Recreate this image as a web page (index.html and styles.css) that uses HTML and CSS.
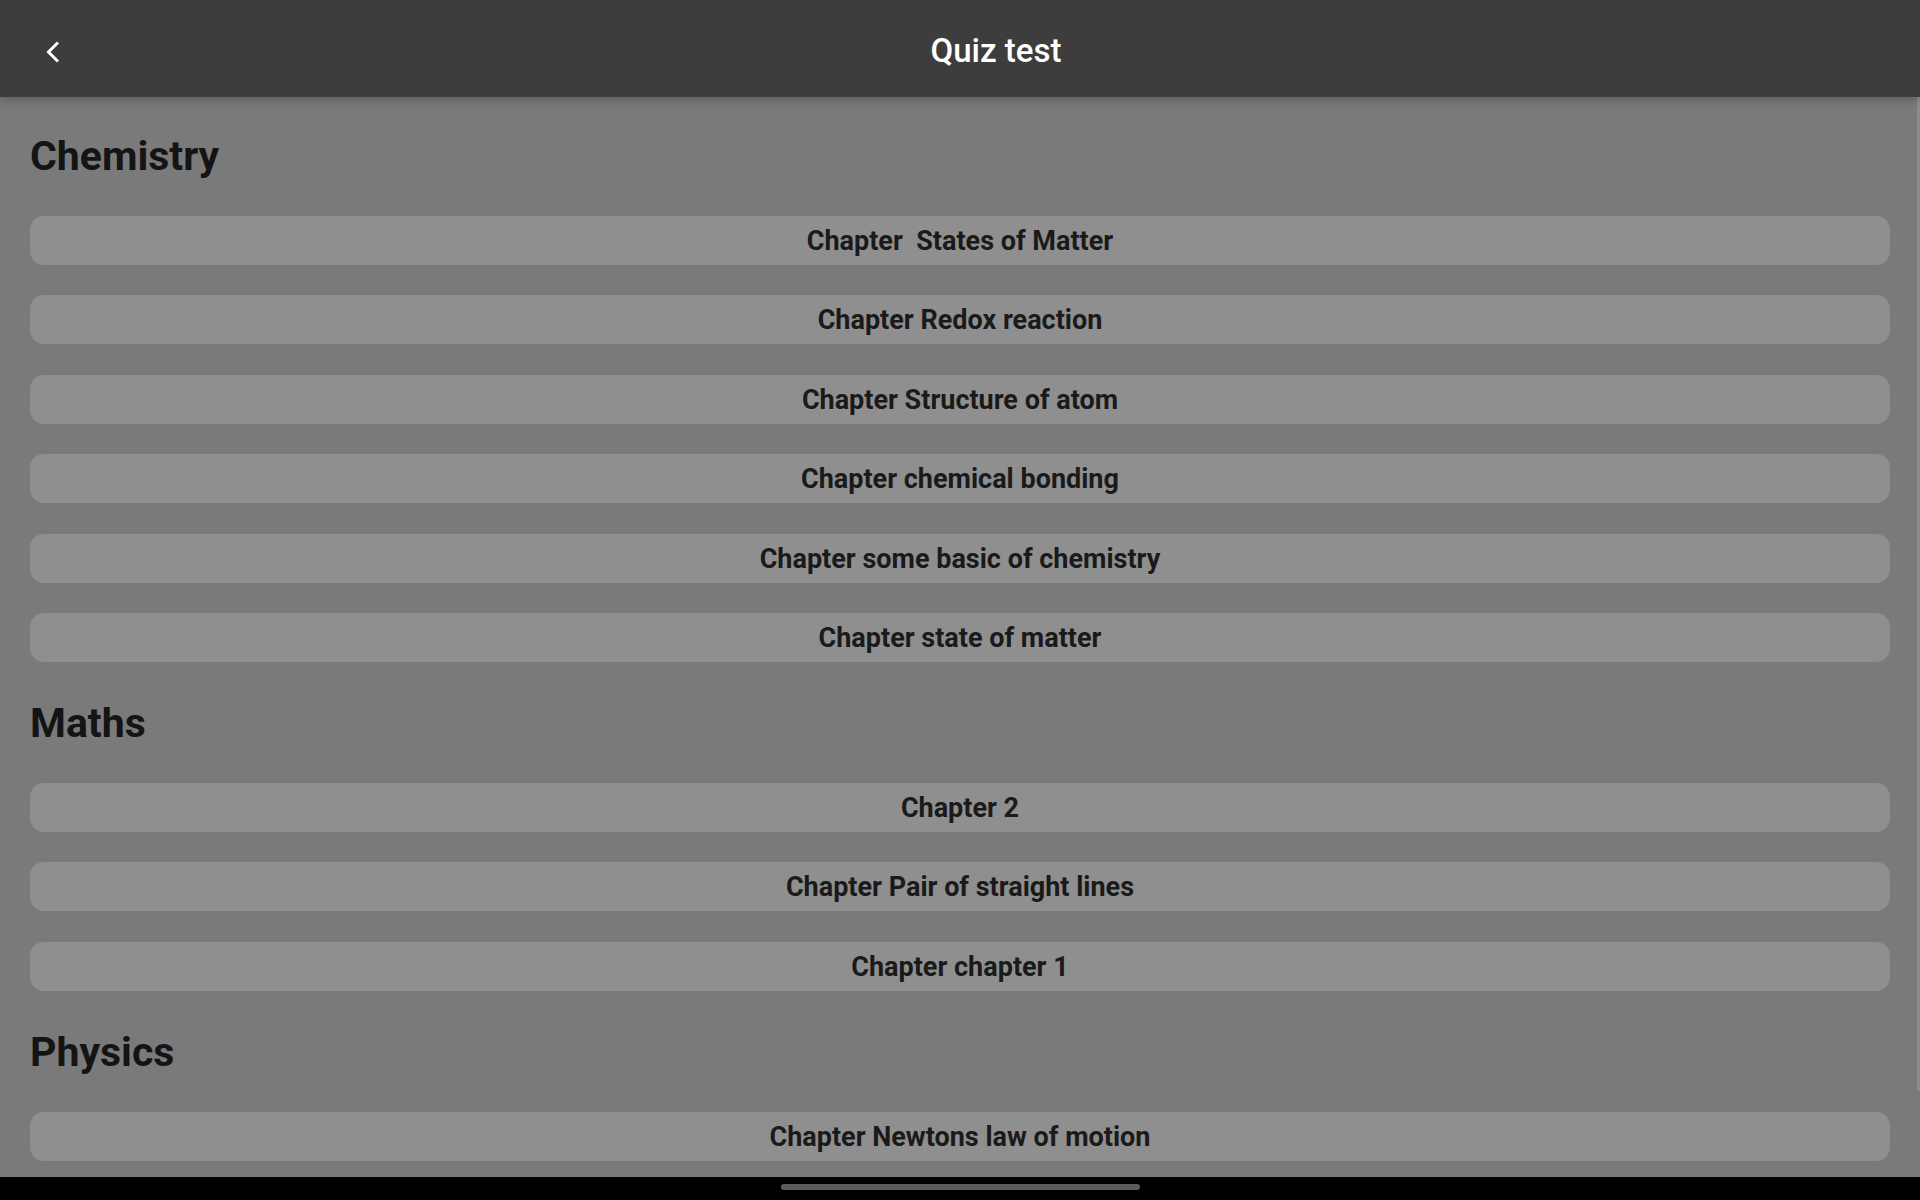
FILE: index.html
```html
<!DOCTYPE html>
<html lang="en">
<head>
<meta charset="utf-8">
<title>Quiz test</title>
<link rel="stylesheet" href="styles.css">
</head>
<body>
<div class="screen">
  <header class="appbar">
    <button class="back" aria-label="Back">
      <svg width="14" height="22" viewBox="0 0 14 22"><path d="M12 1.5 L2.5 11 L12 20.5" fill="none" stroke="#ffffff" stroke-width="3" stroke-linecap="butt" stroke-linejoin="miter"/></svg>
    </button>
    <h1 class="title">Quiz test</h1>
  </header>
  <main class="content">
    <section class="subject">
      <h2 class="subject-name">Chemistry</h2>
      <div class="chapters">
        <button class="chapter">Chapter&nbsp; States of Matter</button>
        <button class="chapter">Chapter Redox reaction</button>
        <button class="chapter">Chapter Structure of atom</button>
        <button class="chapter">Chapter chemical bonding</button>
        <button class="chapter">Chapter some basic of chemistry</button>
        <button class="chapter">Chapter state of matter</button>
      </div>
    </section>
    <section class="subject">
      <h2 class="subject-name">Maths</h2>
      <div class="chapters">
        <button class="chapter">Chapter 2</button>
        <button class="chapter">Chapter Pair of straight lines</button>
        <button class="chapter">Chapter chapter 1</button>
      </div>
    </section>
    <section class="subject">
      <h2 class="subject-name">Physics</h2>
      <div class="chapters">
        <button class="chapter">Chapter Newtons law of motion</button>
      </div>
    </section>
    <div class="scroll-thumb"></div>
  </main>
  <footer class="navbar"><div class="home-pill"></div></footer>
</div>
</body>
</html>
```

FILE: styles.css
```css
* { box-sizing: border-box; }
html, body {
  margin: 0;
  padding: 0;
  width: 1920px;
  height: 1200px;
  overflow: hidden;
  background: #7a7a7a;
  font-family: Roboto, "Noto Sans", "Liberation Sans", sans-serif;
}
.screen {
  display: flex;
  flex-direction: column;
  width: 1920px;
  height: 1200px;
}
.appbar {
  position: relative;
  z-index: 2;
  flex: 0 0 97px;
  display: flex;
  align-items: center;
  background: #3d3d3d;
  box-shadow: 0 2px 10px rgba(0, 0, 0, 0.28);
}
.back {
  flex: 0 0 72px;
  height: 97px;
  display: flex;
  align-items: center;
  justify-content: flex-start;
  padding: 7px 0 0 46px;
  margin: 0;
  border: 0;
  background: transparent;
}
.back svg { display: block; }
.title {
  flex: 1;
  margin: 0;
  text-align: center;
  color: #ffffff;
  font-size: 33px;
  font-weight: 500;
  line-height: 40px;
  padding-top: 4px;
}
.content {
  position: relative;
  flex: 1;
  overflow: hidden;
  padding: 36px 30px 0 30px;
}
.subject + .subject { margin-top: 38px; }
.subject-name {
  margin: 0;
  font-size: 41px;
  font-weight: 700;
  line-height: 47px;
  color: #141414;
  padding-left: 0;
}
.chapters {
  display: flex;
  flex-direction: column;
  gap: 30.4px;
  margin-top: 36px;
}
.chapter {
  height: 49px;
  width: 100%;
  border: 0;
  border-radius: 14px;
  background: #8f8f8f;
  color: #1a1a1a;
  font-family: Roboto, "Noto Sans", "Liberation Sans", sans-serif;
  font-size: 27px;
  font-weight: 700;
  line-height: 47px;
  padding: 2px 0 0 0;
  margin: 0;
  text-align: center;
  white-space: pre;
}
.scroll-thumb {
  position: absolute;
  right: 0;
  top: 0;
  width: 3px;
  height: 994px;
  background: #8c8c8c;
}
.navbar {
  flex: 0 0 23px;
  background: #000000;
  display: flex;
  justify-content: center;
  align-items: flex-start;
  padding-top: 7px;
}
.home-pill {
  width: 359px;
  height: 6px;
  border-radius: 3px;
  background: #5c5c5c;
}
```
